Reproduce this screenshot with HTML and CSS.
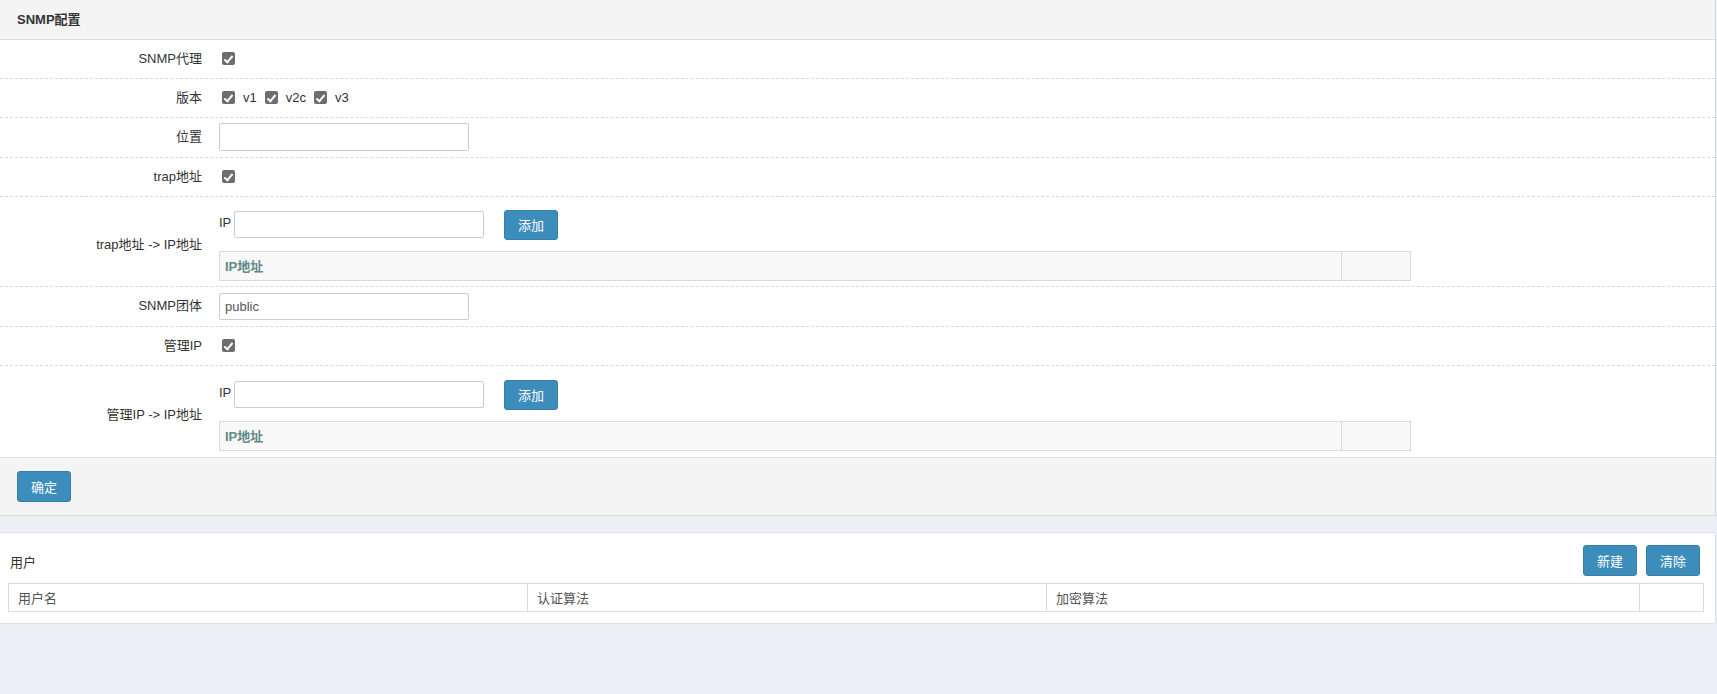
FILE: index.html
```html
<!DOCTYPE html>
<html>
<head>
    <meta charset="utf-8">
    <title>SNMP配置</title>
    <link rel="stylesheet" href="styles.css">
</head>
<body>
    <div class="panel">
        <div class="panel-head">SNMP配置</div>

        <div class="form-row first">
            <div class="form-label">SNMP代理</div>
            <div class="form-field"><input type="checkbox" class="chk" checked></div>
        </div>
        <div class="form-row">
            <div class="form-label">版本</div>
            <div class="form-field">
                <label class="ver"><input type="checkbox" class="chk" checked><span>v1</span></label>
                <label class="ver"><input type="checkbox" class="chk" checked><span>v2c</span></label>
                <label class="ver"><input type="checkbox" class="chk" checked><span>v3</span></label>
            </div>
        </div>
        <div class="form-row">
            <div class="form-label">位置</div>
            <div class="form-field"><input type="text" class="txt"></div>
        </div>
        <div class="form-row">
            <div class="form-label">trap地址</div>
            <div class="form-field"><input type="checkbox" class="chk" checked></div>
        </div>
        <div class="form-row tall">
            <div class="form-label">trap地址 -&gt; IP地址</div>
            <div class="form-field stack">
                <div class="ip-line">
                    <span class="ip-tag">IP</span>
                    <input type="text" class="txt small">
                    <button class="btn">添加</button>
                </div>
                <table class="ip-table">
                    <tr><th>IP地址</th><th class="op"></th></tr>
                </table>
            </div>
        </div>
        <div class="form-row">
            <div class="form-label">SNMP团体</div>
            <div class="form-field"><input type="text" class="txt small" value="public"></div>
        </div>
        <div class="form-row">
            <div class="form-label">管理IP</div>
            <div class="form-field"><input type="checkbox" class="chk" checked></div>
        </div>
        <div class="form-row tall last">
            <div class="form-label">管理IP -&gt; IP地址</div>
            <div class="form-field stack">
                <div class="ip-line">
                    <span class="ip-tag">IP</span>
                    <input type="text" class="txt small">
                    <button class="btn">添加</button>
                </div>
                <table class="ip-table">
                    <tr><th>IP地址</th><th class="op"></th></tr>
                </table>
            </div>
        </div>

        <div class="panel-foot">
            <button class="btn big">确定</button>
        </div>
    </div>

    <div class="box">
        <div class="box-head">
            <span class="box-title">用户</span>
            <div class="box-tools">
                <button class="btn big">新建</button>
                <button class="btn big">清除</button>
            </div>
        </div>
        <table class="user-table">
            <tr>
                <th class="c1">用户名</th>
                <th class="c2">认证算法</th>
                <th class="c3">加密算法</th>
                <th></th>
            </tr>
        </table>
    </div>
</body>
</html>
```

FILE: styles.css
```css
html, body {
    height: 100%;
}
body {
    margin: 0;
    background-color: #ecf0f5;
    font-family: "Liberation Sans", Arial, "Noto Sans CJK SC", sans-serif;
    font-size: 13px;
    color: #333;
}
.panel {
    width: 1716px;
    background-color: #fff;
    border-right: 1px solid #d2d6de;
    border-bottom: 1px solid #d8d8d8;
    box-sizing: border-box;
}
.panel-head {
    height: 40px;
    line-height: 39px;
    padding-left: 17px;
    background-color: #f4f4f4;
    border-bottom: 1px solid #dcdcdc;
    box-sizing: border-box;
    font-weight: bold;
}
.form-row {
    display: flex;
    align-items: center;
    height: 39.5px;
    border-bottom: 1px dashed #d9d9d9;
    box-sizing: border-box;
}
.form-row.first {
    height: 38.5px;
}
.form-row.tall {
    height: 90px;
    padding: 12px 0 5px;
}
.form-row.tall.last {
    height: 91px;
    border-bottom: none;
}
.form-label {
    width: 202px;
    text-align: right;
    line-height: 18px;
    flex-shrink: 0;
}
.form-field {
    margin-left: 17px;
    display: flex;
    align-items: center;
}
.form-field.stack {
    flex-direction: column;
    align-items: flex-start;
    gap: 11px;
}
.chk {
    appearance: none;
    -webkit-appearance: none;
    width: 13px;
    height: 13px;
    margin: 0 0 0 3px;
    background-color: #6d6d6d;
    border-radius: 2px;
    position: relative;
}
.chk:checked::after {
    content: "";
    position: absolute;
    left: 4px;
    top: 1.5px;
    width: 3px;
    height: 7px;
    border: solid #fff;
    border-width: 0 2px 2px 0;
    transform: rotate(40deg);
}
.ver {
    display: flex;
    align-items: center;
    margin-right: 5px;
}
.ver span {
    margin-left: 8px;
    line-height: 18px;
}
.txt {
    width: 250px;
    height: 28px;
    padding: 0 5px;
    border: 1px solid #ccc;
    border-radius: 2px;
    box-sizing: border-box;
    font-family: inherit;
    font-size: 13px;
    color: #555;
    outline: none;
}
.txt.small {
    height: 27px;
}
.ip-line {
    display: flex;
    align-items: center;
    height: 30px;
}
.ip-tag {
    width: 15px;
    align-self: flex-start;
    line-height: 16px;
    margin-top: 5px;
}
.ip-line .btn {
    margin-left: 20px;
}
.btn {
    height: 30px;
    padding: 0 13px;
    background-color: #3c8dbc;
    border: 1px solid #367fa9;
    border-radius: 3px;
    color: #fff;
    font-family: inherit;
    font-size: 13px;
    cursor: pointer;
}
.btn.big {
    height: 31px;
}
.ip-table {
    width: 1192px;
    border-collapse: collapse;
}
.ip-table th {
    height: 28px;
    padding: 0 5px;
    background-color: #f8f8f8;
    border: 1px solid #dadada;
    color: #5f8a86;
    text-align: left;
    font-weight: bold;
}
.ip-table th.op {
    width: 58px;
}
.panel-foot {
    height: 58px;
    display: flex;
    align-items: center;
    padding-left: 17px;
    background-color: #f4f4f4;
    border-top: 1px solid #dcdcdc;
    box-sizing: border-box;
}
.box {
    width: 1716px;
    margin-top: 16px;
    padding: 12px 11px 11px 8px;
    background-color: #fff;
    border: 1px solid #dcdfe4;
    border-left: none;
    border-radius: 0 3px 3px 0;
    box-sizing: border-box;
}
.box-head {
    display: flex;
    align-items: center;
    justify-content: space-between;
    height: 31px;
    margin-bottom: 7px;
}
.box-title {
    margin-left: 2px;
    margin-top: 2px;
}
.box-tools {
    display: flex;
    gap: 9px;
    margin-right: 4px;
}
.user-table {
    width: 100%;
    border-collapse: collapse;
}
.user-table th {
    height: 27px;
    padding: 0 9px;
    border: 1px solid #dadada;
    text-align: left;
    font-weight: normal;
    color: #555;
}
.user-table .c1 {
    width: 500px;
}
.user-table .c2 {
    width: 500px;
}
.user-table .c3 {
    width: 574px;
}
```
